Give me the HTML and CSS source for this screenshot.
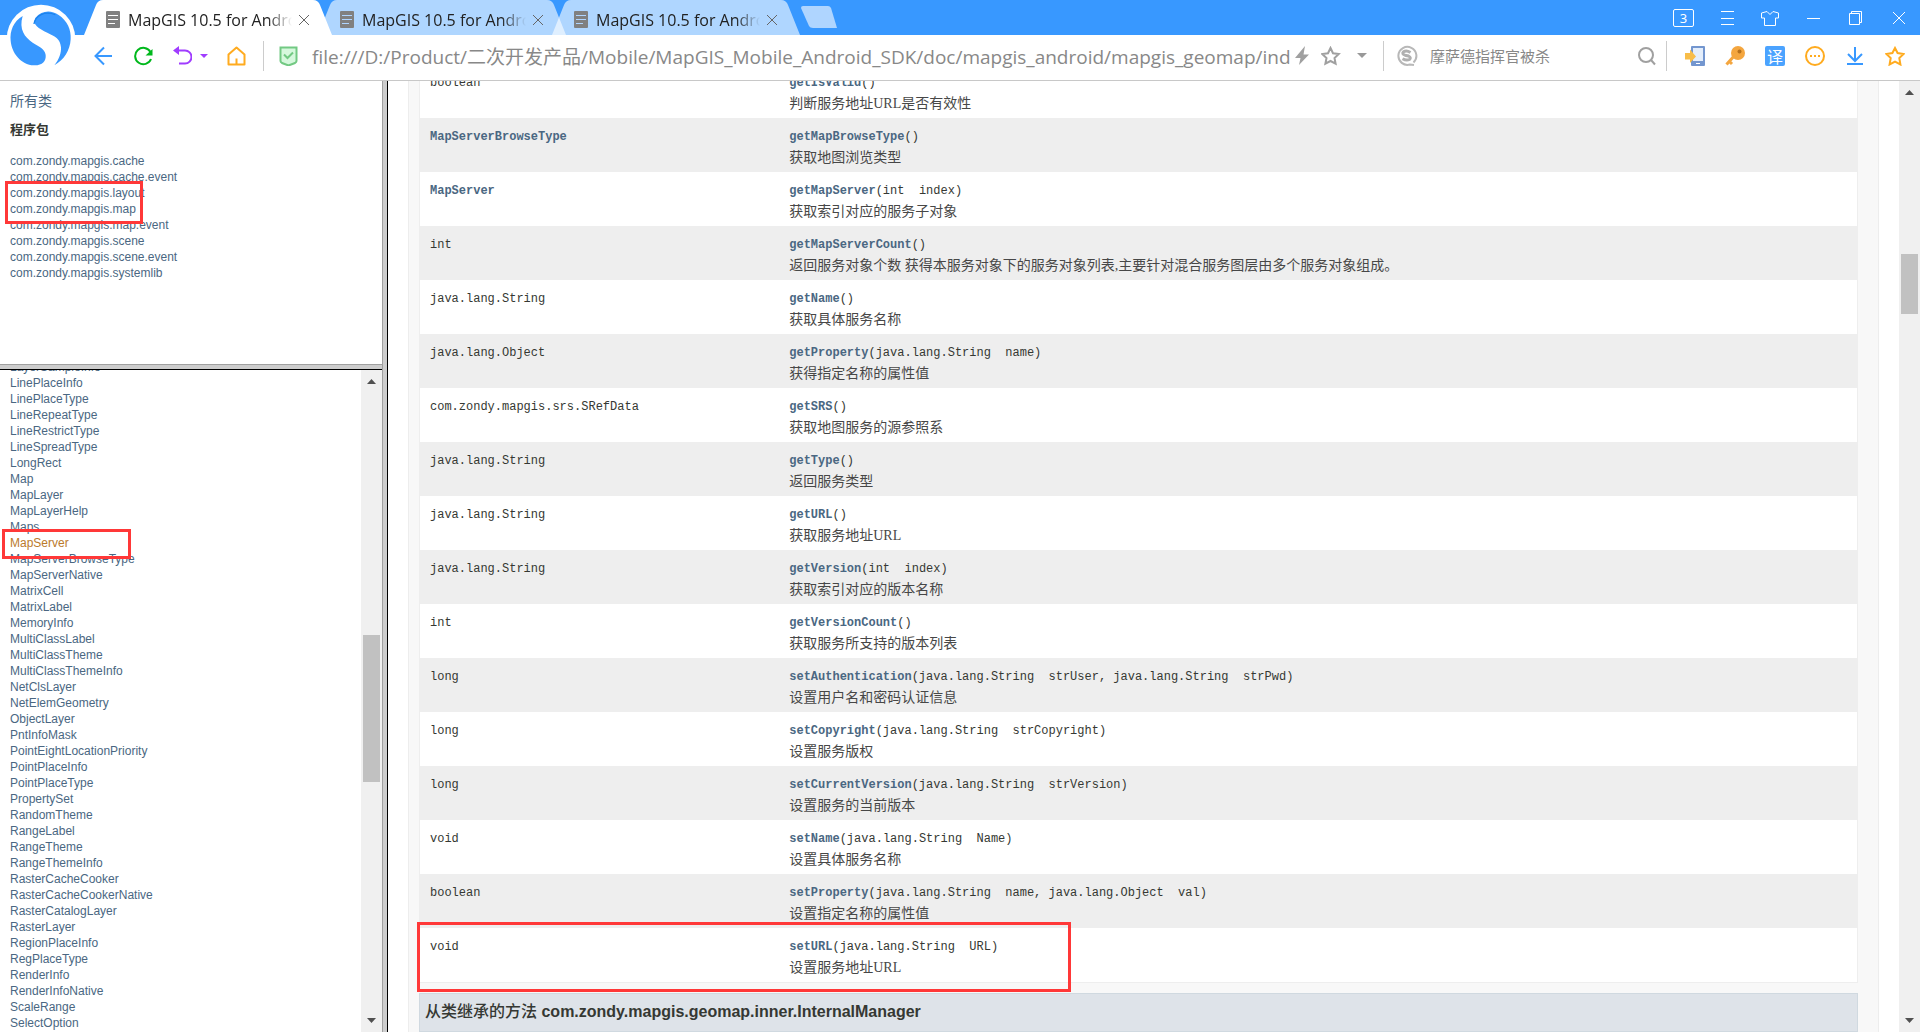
FILE: index.html
```html
<!DOCTYPE html>
<html lang="zh-CN">
<head>
<meta charset="utf-8">
<title>MapGIS 10.5 for Android</title>
<link rel="stylesheet" href="styles.css">
</head>
<body>
<div class="browser">
  <header class="titlebar">
    <svg class="logo" viewBox="0 0 210 210" aria-hidden="true">
      <circle cx="105" cy="105" r="103" fill="#fff"/>
      <path d="M50 36C22 52 11 82 14 110C17 146 44 182 84 184C108 185 121 172 119 153C117 134 96 126 80 116C56 100 38 76 50 36Z" fill="#3898ff"/>
      <path d="M88 42C108 18 136 18 158 33C184 50 196 78 194 106C192 140 174 168 145 184C160 166 166 146 165 130C163 104 148 98 124 86C98 74 78 62 88 42Z" fill="#3898ff"/>
      <path d="M84 60C88 34 116 20 148 32" fill="none" stroke="#1b83ec" stroke-width="4"/>
    </svg>
    <nav class="tabs">
      <div class="tab tab-active">
        <svg class="tab-shape" viewBox="0 0 248 35" preserveAspectRatio="none"><path d="M0 35L12 5Q14 0 19 0H229Q234 0 236 5L248 35Z"/></svg>
        <svg class="doc" viewBox="0 0 14 17"><rect width="14" height="17" rx="1" fill="#808080"/><path d="M2 4.500h10M2 8.500h10M2 12.500h7" stroke="#fff"/></svg>
        <a class="tab-title" href="#">MapGIS 10.5 for Android</a>
        <button class="tab-close" aria-label="关闭"><svg viewBox="0 0 12 12"><path d="M1 1L11 11M11 1L1 11"/></svg></button>
      </div>
      <div class="tab">
        <svg class="tab-shape" viewBox="0 0 248 35" preserveAspectRatio="none"><path d="M0 35L12 5Q14 0 19 0H229Q234 0 236 5L248 35Z"/></svg>
        <svg class="doc" viewBox="0 0 14 17"><rect width="14" height="17" rx="1" fill="#808080"/><path d="M2 4.500h10M2 8.500h10M2 12.500h7" stroke="#afd5ff"/></svg>
        <a class="tab-title" href="#">MapGIS 10.5 for Android</a>
        <button class="tab-close" aria-label="关闭"><svg viewBox="0 0 12 12"><path d="M1 1L11 11M11 1L1 11"/></svg></button>
      </div>
      <div class="tab">
        <svg class="tab-shape" viewBox="0 0 248 35" preserveAspectRatio="none"><path d="M0 35L12 5Q14 0 19 0H229Q234 0 236 5L248 35Z"/></svg>
        <svg class="doc" viewBox="0 0 14 17"><rect width="14" height="17" rx="1" fill="#808080"/><path d="M2 4.500h10M2 8.500h10M2 12.500h7" stroke="#afd5ff"/></svg>
        <a class="tab-title" href="#">MapGIS 10.5 for Android</a>
        <button class="tab-close" aria-label="关闭"><svg viewBox="0 0 12 12"><path d="M1 1L11 11M11 1L1 11"/></svg></button>
      </div>
      <button class="new-tab" aria-label="新标签页"><svg viewBox="0 0 36 22"><path d="M2 0H27Q29 0 30 2L36 22H12Q9 22 8 20L0 2Q0 0 2 0Z" fill="#afd5ff"/></svg></button>
    </nav>
    <div class="window-controls">
      <button aria-label="标签数"><span class="tab-count">3</span></button>
      <button aria-label="菜单"><svg viewBox="0 0 20 20"><path d="M4 3.500h13M4 10.500h13M4 16.500h13"/></svg></button>
      <button aria-label="皮肤"><svg viewBox="0 0 20 20"><path d="M7 3.500L1.500 5V10H4.500V17.500H15.500V10H18.500V5L13 3.500L10 6.500Z"/></svg></button>
      <button aria-label="最小化"><svg viewBox="0 0 20 20"><path d="M4 10.500h13"/></svg></button>
      <button aria-label="还原"><svg viewBox="0 0 20 20"><path d="M3.500 5.500h10v11h-10zM5.500 5V3.500h10V14.500H14"/></svg></button>
      <button aria-label="关闭窗口"><svg viewBox="0 0 20 20"><path d="M4 4L16 16M16 4L4 16"/></svg></button>
    </div>
  </header>

  <div class="toolbar">
    <div class="nav-buttons">
      <button aria-label="后退"><svg viewBox="0 0 20 20" fill="none" stroke="#3898ff" stroke-width="2"><path d="M18 10H2M10 1.500L1.500 10L10 18.500"/></svg></button>
      <button aria-label="刷新"><svg viewBox="0 0 20 20" fill="none" stroke="#00b81c" stroke-width="2"><path d="M17.500 6A8.200 8.200 0 1 0 18 13"/><path d="M19.500 3V9.500H12.500Z" fill="#00b81c" stroke="none"/></svg></button>
      <button class="undo" aria-label="恢复"><svg viewBox="0 0 20 20" fill="none" stroke="#a03cff" stroke-width="2"><path d="M5 4.500H13A6.500 6.500 0 0 1 13 17.500H7"/><path d="M7 0V9L1 4.500Z" fill="#a03cff" stroke="none"/></svg><svg class="caret" viewBox="0 0 8 4"><path d="M0 0H8L4 4Z" fill="#a03cff"/></svg></button>
      <button aria-label="主页"><svg viewBox="0 0 20 20" fill="none" stroke="#ffab1f" stroke-width="2"><path d="M1.500 8.500L9.500 1.500L17.500 8.500V18.500H1.500ZM9.500 18V12.500" stroke-linejoin="round"/></svg></button>
    </div>
    <span class="divider"></span>
    <label class="address">
      <svg viewBox="0 0 20 20"><path d="M1.500 1.500H17.500V15Q17.500 16 16 17L9.500 19.500L3 17Q1.500 16 1.500 15Z" fill="#d6f8dd" stroke="#72c983" stroke-width="2"/><path d="M5 8.500L8.500 12L14 6.500" fill="none" stroke="#72c983" stroke-width="2"/></svg>
      <input type="text" aria-label="地址" value="file:///D:/Product/二次开发产品/Mobile/MapGIS_Mobile_Android_SDK/doc/mapgis_android/mapgis_geomap/ind">
    </label>
    <div class="address-tools">
      <button class="bolt" aria-label="高速"><svg viewBox="0 0 14 20"><path d="M10 0L0 12H5.500L4 19L14 8.500H8.500Z" fill="#a0a0a0"/></svg></button>
      <button aria-label="收藏"><svg viewBox="0 0 20 20"><path d="M9.500 2L12 7.300L17.700 8L13.500 12L14.600 17.700L9.500 15L4.400 17.700L5.500 12L1.300 8L7 7.300Z" fill="none" stroke="#a0a0a0" stroke-width="2"/></svg></button>
      <button class="caret-button" aria-label="展开"><svg viewBox="0 0 10 5"><path d="M0 0H10L5 5Z" fill="#999"/></svg></button>
    </div>
    <div class="search">
      <svg class="sogou" viewBox="0 0 22 22" aria-hidden="true"><path d="M17.500 17.500A9 9 0 1 0 14 19.500L18 20" fill="none" stroke="#b8b8b8" stroke-width="2"/><path d="M14.500 7.500Q10.500 5 7.500 6.800Q5.500 9 9 10.200L12.500 11Q15.500 12.500 13.500 14.500Q10.500 16 6.500 13.800" fill="none" stroke="#b0b0b0" stroke-width="3"/></svg>
      <input type="search" aria-label="搜索" placeholder="摩萨德指挥官被杀">
      <button aria-label="搜索"><svg viewBox="0 0 20 20" fill="none" stroke="#a0a0a0" stroke-width="2"><circle cx="10" cy="9" r="7"/><path d="M15 14L19 18.500"/></svg></button>
    </div>
    <div class="extensions">
      <button aria-label="手机"><svg viewBox="0 0 20 20"><rect x="6" width="14" height="20" rx="1" fill="#7396cf"/><path d="M8 2h10v13H8z" fill="#e4eefb"/><path d="M11 17.500h4" stroke="#fff"/><path d="M0 7H5V3.500L11 10.500L5 17V13.500H0Z" fill="#f8bd49"/></svg></button>
      <button aria-label="密码"><svg viewBox="0 0 20 20"><circle cx="13" cy="7" r="7" fill="#f4a63f"/><path d="M10 9L1.500 18.500M4 15L7 18" stroke="#f4a63f" stroke-width="3"/><circle cx="14.500" cy="5.500" r="2" fill="#b5701c"/></svg></button>
      <button class="translate" aria-label="翻译">译</button>
      <button aria-label="更多"><svg viewBox="0 0 20 20"><circle cx="10" cy="10" r="9" fill="none" stroke="#ffab1f" stroke-width="2"/><path d="M5 9h2v2H5zM9 9h2v2H9zM13 9h2v2h-2z" fill="#ffab1f"/></svg></button>
      <button aria-label="下载"><svg viewBox="0 0 20 20" fill="none" stroke="#3898ff" stroke-width="2"><path d="M10 1V14M3 8L10 15L17 8M2 18H18"/></svg></button>
      <button aria-label="收藏夹"><svg viewBox="0 0 20 20"><path d="M10 2L12.600 7L18.500 8L14.300 12L15.400 18.500L10 15.700L4.600 18.500L5.700 12L1.500 8L7.400 7Z" fill="none" stroke="#ffab1f" stroke-width="2"/></svg></button>
    </div>
  </div>

  <div class="frames">
    <aside class="sidebar">
      <section class="packages">
        <a class="all-classes" href="#">所有类</a>
        <h2>程序包</h2>
        <ul class="links">
          <li><a href="#">com.zondy.mapgis.cache</a></li>
          <li><a href="#">com.zondy.mapgis.cache.event</a></li>
          <li><a href="#">com.zondy.mapgis.layout</a></li>
          <li><a href="#">com.zondy.mapgis.map</a></li>
          <li><a href="#">com.zondy.mapgis.map.event</a></li>
          <li><a href="#">com.zondy.mapgis.scene</a></li>
          <li><a href="#">com.zondy.mapgis.scene.event</a></li>
          <li><a href="#">com.zondy.mapgis.systemlib</a></li>
          <li class="mark mark-packages" aria-hidden="true"></li>
        </ul>
      </section>
      <section class="classes">
        <div class="class-view">
          <ul class="links">
            <li><a href="#">LayerSampleInfo</a></li>
            <li><a href="#">LinePlaceInfo</a></li>
            <li><a href="#">LinePlaceType</a></li>
            <li><a href="#">LineRepeatType</a></li>
            <li><a href="#">LineRestrictType</a></li>
            <li><a href="#">LineSpreadType</a></li>
            <li><a href="#">LongRect</a></li>
            <li><a href="#">Map</a></li>
            <li><a href="#">MapLayer</a></li>
            <li><a href="#">MapLayerHelp</a></li>
            <li><a href="#">Maps</a></li>
            <li class="current"><a href="#">MapServer</a><span class="mark mark-class"></span></li>
            <li><a href="#">MapServerBrowseType</a></li>
            <li><a href="#">MapServerNative</a></li>
            <li><a href="#">MatrixCell</a></li>
            <li><a href="#">MatrixLabel</a></li>
            <li><a href="#">MemoryInfo</a></li>
            <li><a href="#">MultiClassLabel</a></li>
            <li><a href="#">MultiClassTheme</a></li>
            <li><a href="#">MultiClassThemeInfo</a></li>
            <li><a href="#">NetClsLayer</a></li>
            <li><a href="#">NetElemGeometry</a></li>
            <li><a href="#">ObjectLayer</a></li>
            <li><a href="#">PntInfoMask</a></li>
            <li><a href="#">PointEightLocationPriority</a></li>
            <li><a href="#">PointPlaceInfo</a></li>
            <li><a href="#">PointPlaceType</a></li>
            <li><a href="#">PropertySet</a></li>
            <li><a href="#">RandomTheme</a></li>
            <li><a href="#">RangeLabel</a></li>
            <li><a href="#">RangeTheme</a></li>
            <li><a href="#">RangeThemeInfo</a></li>
            <li><a href="#">RasterCacheCooker</a></li>
            <li><a href="#">RasterCacheCookerNative</a></li>
            <li><a href="#">RasterCatalogLayer</a></li>
            <li><a href="#">RasterLayer</a></li>
            <li><a href="#">RegionPlaceInfo</a></li>
            <li><a href="#">RegPlaceType</a></li>
            <li><a href="#">RenderInfo</a></li>
            <li><a href="#">RenderInfoNative</a></li>
            <li><a href="#">ScaleRange</a></li>
            <li><a href="#">SelectOption</a></li>
          </ul>
        </div>
        <div class="scrollbar">
          <svg viewBox="0 0 9 5"><path d="M0 5L4.500 0L9 5Z"/></svg>
          <div class="track"><span class="before-classes"></span><span class="thumb thumb-classes"></span></div>
          <svg viewBox="0 0 9 5"><path d="M0 0L4.500 5L9 0Z"/></svg>
        </div>
      </section>
    </aside>

    <main class="content">
      <div class="details">
        <div class="methods">
          <table>
            <tbody>
              <tr><td><code>boolean</code></td><td><code><a href="#">getIsValid</a>()</code><p>判断服务地址URL是否有效性</p></td></tr>
              <tr><td><code><a href="#">MapServerBrowseType</a></code></td><td><code><a href="#">getMapBrowseType</a>()</code><p>获取地图浏览类型</p></td></tr>
              <tr><td><code><a href="#">MapServer</a></code></td><td><code><a href="#">getMapServer</a>(int&nbsp; index)</code><p>获取索引对应的服务子对象</p></td></tr>
              <tr><td><code>int</code></td><td><code><a href="#">getMapServerCount</a>()</code><p>返回服务对象个数 获得本服务对象下的服务对象列表,主要针对混合服务图层由多个服务对象组成。</p></td></tr>
              <tr><td><code>java.lang.String</code></td><td><code><a href="#">getName</a>()</code><p>获取具体服务名称</p></td></tr>
              <tr><td><code>java.lang.Object</code></td><td><code><a href="#">getProperty</a>(java.lang.String&nbsp; name)</code><p>获得指定名称的属性值</p></td></tr>
              <tr><td><code>com.zondy.mapgis.srs.SRefData</code></td><td><code><a href="#">getSRS</a>()</code><p>获取地图服务的源参照系</p></td></tr>
              <tr><td><code>java.lang.String</code></td><td><code><a href="#">getType</a>()</code><p>返回服务类型</p></td></tr>
              <tr><td><code>java.lang.String</code></td><td><code><a href="#">getURL</a>()</code><p>获取服务地址URL</p></td></tr>
              <tr><td><code>java.lang.String</code></td><td><code><a href="#">getVersion</a>(int&nbsp; index)</code><p>获取索引对应的版本名称</p></td></tr>
              <tr><td><code>int</code></td><td><code><a href="#">getVersionCount</a>()</code><p>获取服务所支持的版本列表</p></td></tr>
              <tr><td><code>long</code></td><td><code><a href="#">setAuthentication</a>(java.lang.String&nbsp; strUser, java.lang.String&nbsp; strPwd)</code><p>设置用户名和密码认证信息</p></td></tr>
              <tr><td><code>long</code></td><td><code><a href="#">setCopyright</a>(java.lang.String&nbsp; strCopyright)</code><p>设置服务版权</p></td></tr>
              <tr><td><code>long</code></td><td><code><a href="#">setCurrentVersion</a>(java.lang.String&nbsp; strVersion)</code><p>设置服务的当前版本</p></td></tr>
              <tr><td><code>void</code></td><td><code><a href="#">setName</a>(java.lang.String&nbsp; Name)</code><p>设置具体服务名称</p></td></tr>
              <tr><td><code>boolean</code></td><td><code><a href="#">setProperty</a>(java.lang.String&nbsp; name, java.lang.Object&nbsp; val)</code><p>设置指定名称的属性值</p></td></tr>
              <tr><td><code>void</code></td><td><code><a href="#">setURL</a>(java.lang.String&nbsp; URL)</code><p>设置服务地址URL</p></td></tr>
            </tbody>
          </table>
          <span class="mark mark-method"></span>
        </div>
        <h3>从类继承的方法 <b>com.zondy.mapgis.geomap.inner.InternalManager</b></h3>
      </div>
    </main>
    <div class="scrollbar">
      <svg viewBox="0 0 9 5"><path d="M0 5L4.500 0L9 5Z"/></svg>
      <div class="track"><span class="before-content"></span><span class="thumb thumb-content"></span></div>
      <svg viewBox="0 0 9 5"><path d="M0 0L4.500 5L9 0Z"/></svg>
    </div>
  </div>
</div>
</body>
</html>
```
FILE: styles.css
```css
* { box-sizing: border-box; }

body {
  margin: 0;
  background: #fff;
  color: #353833;
  font-family: "Liberation Sans", "Noto Sans CJK SC", sans-serif;
}

button {
  display: flex;
  align-items: center;
  justify-content: center;
  padding: 0;
  border: 0;
  background: none;
}

input {
  min-width: 0;
  padding: 0;
  border: 0;
  outline: 0;
  background: none;
}

a { color: #4a6782; text-decoration: none; }
ul { margin: 0; padding: 0; list-style: none; }
svg { display: block; flex: none; }

.browser {
  display: flex;
  flex-direction: column;
  height: 100vh;
  overflow: hidden;
}

/* Title bar */
.titlebar {
  position: relative;
  display: flex;
  flex: none;
  height: 35px;
  padding-left: 84px;
  background: #3898ff;
}

.logo {
  position: absolute;
  z-index: 2;
  top: 4px;
  left: 6px;
  width: 70px;
  height: 70px;
}

.tabs { display: flex; flex: 1; }

.tab {
  position: relative;
  display: flex;
  align-items: center;
  width: 248px;
  margin-right: -14px;
  padding: 4px 22px 0;
}

.tab-active { z-index: 1; }

.tab-shape {
  position: absolute;
  inset: 0;
  width: 100%;
  height: 100%;
  fill: rgba(255, 255, 255, .6);
}

.tab-active .tab-shape { fill: #fff; }

.doc { position: relative; width: 14px; height: 17px; }

.tab-title {
  position: relative;
  flex: 1;
  margin: 0 6px 0 8px;
  overflow: hidden;
  color: #222;
  font: 16px/24px "Open Sans", sans-serif;
  white-space: nowrap;
  -webkit-mask-image: linear-gradient(to right, #000 85%, transparent);
  mask-image: linear-gradient(to right, #000 85%, transparent);
}

.tab-close { position: relative; }
.tab-close svg { width: 12px; height: 12px; stroke: #666; }

.new-tab { align-self: flex-start; margin: 6px 0 0 15px; }
.new-tab svg { width: 36px; height: 22px; }

.window-controls { display: flex; }
.window-controls button { width: 43px; }
.window-controls svg { width: 20px; height: 20px; fill: none; stroke: #fff; }

.tab-count {
  width: 21px;
  height: 18px;
  border: 1px solid #fff;
  border-radius: 2px;
  color: #fff;
  font: 13px/16px "Noto Sans", sans-serif;
}

/* Toolbar */
.toolbar {
  display: flex;
  flex: none;
  align-items: center;
  height: 46px;
  padding: 0 15px 4px 94px;
  border-bottom: 1px solid #c8c8c8;
}

.toolbar svg { width: 20px; height: 20px; }
.nav-buttons { display: flex; gap: 19px; }
.undo { gap: 8px; }
.toolbar .caret { width: 8px; height: 4px; }

.divider {
  width: 1px;
  height: 30px;
  margin: 0 15px 0 16px;
  background: #ccc;
}

.address { display: flex; flex: 1; align-items: center; gap: 13px; }

.address input {
  flex: 1;
  height: 30px;
  color: #888;
  font: 19px "Open Sans", "Noto Sans CJK SC", sans-serif;
}

.address-tools {
  display: flex;
  gap: 12px;
  padding-right: 16px;
}

.toolbar .bolt svg { width: 14px; }
.toolbar .caret-button svg { width: 10px; height: 5px; }
.caret-button { margin-left: 4px; }

.search {
  display: flex;
  align-items: center;
  width: 284px;
  height: 30px;
  padding: 0 10px 0 12px;
  border: solid #ccc;
  border-width: 0 1px;
}

.toolbar .sogou { width: 22px; height: 22px; margin-right: 12px; }

.search input {
  flex: 1;
  height: 30px;
  font: 15px "Noto Sans CJK SC", sans-serif;
}

.search input::placeholder { color: #888; opacity: 1; }

.extensions { display: flex; gap: 20px; padding-left: 18px; }

.translate {
  width: 20px;
  height: 20px;
  border-radius: 2px;
  background: #4ba3ff;
  color: #fff;
  font: 16px/20px "Noto Sans CJK SC", sans-serif;
}

/* Frames */
.frames { display: flex; flex: 1; min-height: 0; }

.sidebar {
  display: flex;
  flex: none;
  flex-direction: column;
  width: 388px;
  border-right: 1px solid #000;
  box-shadow: inset -4px 0 #cdcdcd, inset -5px 0 #a0a0a0;
  padding-right: 5px;
}

.packages {
  flex: none;
  height: 289px;
  padding: 10px 10px 0;
  border-bottom: 1px solid #000;
  box-shadow: inset 0 -4px #cdcdcd, inset 0 -5px #a0a0a0;
}

.all-classes { display: block; font-size: 14px; line-height: 20px; }
.packages h2 { margin: 9px 0 13px; font-size: 13px; line-height: 20px; }

.links { position: relative; font-size: 12px; line-height: 16px; }
.current { position: relative; }
.current a { color: #bb7a2a; }

.mark { position: absolute; border: 3px solid #ff3838; }
.mark-packages { top: 28px; left: -5px; width: 138px; height: 43px; }
.mark-class { top: -6px; left: -8px; width: 129px; height: 30px; }
.mark-method { bottom: -9px; left: -2px; width: 654px; height: 70px; }

.classes { display: flex; flex: 1; min-height: 0; }
.class-view { flex: 1; overflow: hidden; padding-left: 10px; }
.class-view .links { margin-top: -11px; }

.scrollbar {
  display: flex;
  flex: none;
  flex-direction: column;
  align-items: center;
  width: 21px;
  padding: 9px 0;
  background: #f0f0f0;
}

.scrollbar svg { width: 9px; height: 5px; fill: #505050; }

.track {
  display: flex;
  flex: 1;
  flex-direction: column;
  width: 17px;
  padding: 4px 0;
}

.thumb { background: #c1c1c1; }
.before-classes { flex: 0 0 39.5%; }
.thumb-classes { flex: 0 0 147px; }
.before-content { flex: 0 0 16.9%; }
.thumb-content { flex: 0 0 60px; }

/* Method summary */
.content { flex: 1; min-width: 0; padding: 0 20px; overflow: hidden; }

.details {
  min-height: 100%;
  padding: 0 20px 20px 10px;
  border: solid #ededed;
  border-width: 0 1px;
  background: #f8f8f8;
}

.methods { position: relative; margin-top: -17px; }

.methods table {
  width: 100%;
  table-layout: fixed;
  border: 1px solid #eee;
  border-top: 0;
  border-spacing: 0;
  background: #fff;
}

.methods tr:nth-child(even) { background: #eee; }
.methods td { padding: 9px 10px 3px; vertical-align: top; }
.methods td:first-child { width: 25%; }

code {
  display: block;
  font: 12px/20px "Liberation Mono", monospace;
}

code a { font-weight: bold; }

.methods p {
  margin: 0;
  color: #474747;
  font: 14px/22px "Liberation Serif", "Noto Sans CJK SC", serif;
}

.details h3 {
  margin: 10px 0 0;
  padding: 6px 5px 8px;
  border: 1px solid #d0d9e0;
  background: #dee3e9;
  font-size: 16px;
  font-weight: 500;
  line-height: 23px;
}
```
